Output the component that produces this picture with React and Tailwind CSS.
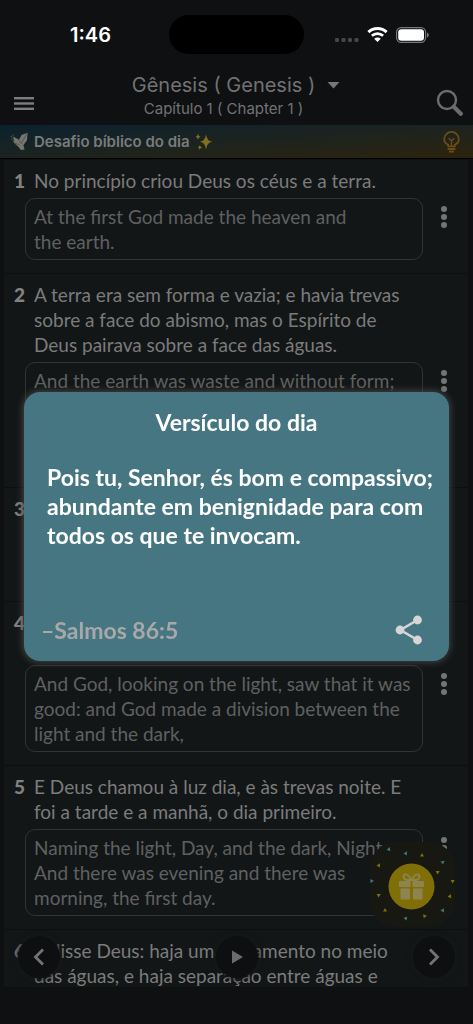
import React, { useState } from "react";

const verses = [
  {
    number: 1,
    lines: ["No princípio criou Deus os céus e a terra."],
    translation: ["At the first God made the heaven and", "the earth."],
  },
  {
    number: 2,
    lines: [
      "A terra era sem forma e vazia; e havia trevas",
      "sobre a face do abismo, mas o Espírito de",
      "Deus pairava sobre a face das águas.",
    ],
    translation: [
      "And the earth was waste and without form;",
      "and it was dark on the face of the deep:",
      "and the Spirit of God was moving on the",
      "face of the waters.",
    ],
  },
  {
    number: 3,
    lines: ["Disse Deus: haja luz. E houve luz."],
    translation: ["And God said, Let there be light: and", "there was light."],
  },
  {
    number: 4,
    lines: ["Viu Deus que a luz era boa; e fez", "separação entre a luz e as trevas."],
    translation: [
      "And God, looking on the light, saw that it was",
      "good: and God made a division between the",
      "light and the dark,",
    ],
  },
  {
    number: 5,
    lines: [
      "E Deus chamou à luz dia, e às trevas noite. E",
      "foi a tarde e a manhã, o dia primeiro.",
    ],
    translation: [
      "Naming the light, Day, and the dark, Night.",
      "And there was evening and there was",
      "morning, the first day.",
    ],
  },
  {
    number: 6,
    lines: [
      "E disse Deus: haja um firmamento no meio",
      "das águas, e haja separação entre águas e",
    ],
    translation: [],
  },
];

// x, y, rotation, color
const confetti = [
  [19, 7, 20, "#3c7480"],
  [36, 11, 30, "#3c7480"],
  [52, 13, 0, "#80700a"],
  [73, 20, 50, "#3c7480"],
  [9, 23, 30, "#80700a"],
  [68, 30, 60, "#80700a"],
  [83, 39, 60, "#80700a"],
  [2, 39, 90, "#3c7480"],
  [9, 53, 60, "#80700a"],
  [80, 54, 20, "#80700a"],
  [15, 68, 0, "#80700a"],
  [73, 68, 30, "#3c7480"],
  [36, 76, 40, "#3c7480"],
  [55, 74, 80, "#80700a"],
];

function StatusBar() {
  return (
    <div className="grid h-[69px] grid-cols-3 items-center">
      <span className="pl-[70px] text-[20px] leading-6 font-semibold text-white">
        1:46
      </span>
      <div className="h-[39px] w-[135px] justify-self-center rounded-full bg-black" />
      <div className="flex items-center justify-end gap-2 pr-11">
        <svg className="mt-2" width="24" height="15" viewBox="0 0 24 15" fill="#46474a">
          <rect x="0" y="7" width="4" height="4" rx="1.2" />
          <rect x="6.5" y="7" width="4" height="4" rx="1.2" />
          <rect x="13" y="7" width="4" height="4" rx="1.2" />
          <rect x="19.5" y="7" width="4" height="4" rx="1.2" />
        </svg>
        <svg width="21" height="15" viewBox="0 0 21 15" fill="none">
          <path d="M1.4 5.2C6.5.3 14.5.3 19.6 5.2" stroke="#fff" strokeWidth="3" />
          <path d="M4.9 8.8c3.2-3 8-3 11.2 0" stroke="#fff" strokeWidth="2.8" />
          <path d="M10.5 15 7.2 11.7c1.8-1.7 4.8-1.7 6.6 0z" fill="#fff" />
        </svg>
        <svg width="33" height="16" viewBox="0 0 33 16">
          <rect x="0.6" y="0.6" width="29" height="14.8" rx="4.6" fill="none" stroke="#77787a" strokeWidth="1.2" />
          <rect x="2.2" y="2.2" width="25.8" height="11.6" rx="3.2" fill="#fff" />
          <path d="M31 5.4c2.4.8 2.4 4.4 0 5.2z" fill="#77787a" />
        </svg>
      </div>
    </div>
  );
}

function Header() {
  return (
    <header className="flex h-14 items-start justify-between pr-[10px] pl-3">
      <button aria-label="Menu" className="mt-6 p-[2px]">
        <svg width="20" height="17" viewBox="0 0 20 17" fill="#7d7d7d">
          <rect y="2" width="20" height="2.4" />
          <rect y="7.3" width="20" height="2.4" />
          <rect y="12.6" width="20" height="2.4" />
        </svg>
      </button>
      <button className="flex items-start gap-3 text-[#727272]">
        <span className="flex flex-col items-center whitespace-nowrap">
          <span className="text-[20px] leading-8">Gênesis ( Genesis )</span>
          <span className="text-[15px] leading-4">Capítulo 1 ( Chapter 1 )</span>
        </span>
        <svg className="mt-[13px]" width="13" height="7" viewBox="0 0 13 7">
          <path d="M0.5 0h12L6.5 6.5z" fill="#777" />
        </svg>
      </button>
      <button aria-label="Buscar" className="mt-5">
        <svg width="27" height="27" viewBox="0 0 27 27" fill="none" stroke="#6c6c6c">
          <circle cx="11" cy="11" r="9" strokeWidth="2.4" />
          <path d="M17.8 17.8l7 7" strokeWidth="4.2" strokeLinecap="round" />
        </svg>
      </button>
    </header>
  );
}

function Banner() {
  return (
    <a
      href="#desafio"
      className="flex h-[34px] items-center border-b border-black bg-linear-to-br from-[#0b212f] via-[#1c231f] to-[#2d230c] px-[10px]"
    >
      <svg width="18" height="19" viewBox="0 0 18 19">
        <path
          d="M4 9.2 3.2 4.5 9 7.8 11.5 3 17.6.8 17 8.2 13.4 13.2 14.6 17.6 10.8 18 8.6 15 5.2 12 2.6 9z"
          fill="#77756f"
        />
        <path d="M8.9 8.4l2.2 3.2L16.8 1.6M5 11.4l4.4 1.4" stroke="#4f4e4b" strokeWidth="0.8" fill="none" />
        <path d="M4.6 9.6 1.4 5.6" stroke="#344a22" strokeWidth="0.8" />
        <path d="M0 4.6 2.4 6 2 3.6zM.6 7.4l2.4.4-1.4-1.4zM2.2 2.4l1.6 2.4.4-2.4z" fill="#35512a" />
      </svg>
      <span className="ml-[6px] text-[15px] leading-5 font-semibold text-[#787c7c]">
        Desafio bíblico do dia
      </span>
      <svg className="ml-[5px]" width="18" height="18" viewBox="0 0 18 18" fill="#80701c">
        <path d="M11 1.2Q11.8 8 17.4 8.800 11.8 9.600 11 16.600 10.200 9.600 4.800 8.800 10.200 8 11 1.200z" />
        <path d="M3 .8Q3.400 3.400 5.600 3.800 3.400 4.200 3 6.800 2.600 4.200.4 3.800 2.600 3.400 3 .8z" />
        <path d="M4.800 12Q5.100 14 7 14.400 5.100 14.800 4.800 17 4.500 14.800 2.600 14.400 4.500 14 4.800 12z" />
      </svg>
      <svg className="mr-[3px] ml-auto" width="17" height="22" viewBox="0 0 17 22" fill="none" stroke="#6b4c14" strokeWidth="1.8">
        <path d="M5.2 15.4V13.8C2.4 12.4 1.2 10.4 1.2 8.2a7.3 7.3 0 0 1 14.6 0c0 2.2-1.2 4.2-4 5.6v1.6z" />
        <path d="M5.6 7.2 8.5 9.8l2.9-2.6M8.5 9.8V15" strokeWidth="1.4" />
        <path d="M4.600 18h7.800M6 20.600h5" />
      </svg>
    </a>
  );
}

function Verse({ verse }) {
  return (
    <li className="flex border-b border-[#0c0e0f] bg-[#131617] pt-2 pb-[13px] text-[19px] leading-[25px]">
      <span className="w-[21px] shrink-0 text-right font-black text-[#828282]">
        {verse.number}
      </span>
      <div className="min-w-0 flex-1">
        <p className="pl-[9px] whitespace-nowrap text-[#7b7b7b]">
          {verse.lines.map((line) => (
            <span key={line} className="block">
              {line}
            </span>
          ))}
        </p>
        {verse.translation.length > 0 && (
          <div className="mt-[5px] flex items-start">
            <p className="min-w-0 flex-1 rounded-[10px] border border-[#313334] px-2 py-[5px] whitespace-nowrap text-[#5f6060]">
              {verse.translation.map((line) => (
                <span key={line} className="block">
                  {line}
                </span>
              ))}
            </p>
            <button aria-label={`Opções do versículo ${verse.number}`} className="flex w-[45px] justify-center pt-2 pr-1">
              <svg width="6" height="22" viewBox="0 0 6 22" fill="#747474">
                <circle cx="3" cy="3" r="3" />
                <circle cx="3" cy="11" r="3" />
                <circle cx="3" cy="19" r="3" />
              </svg>
            </button>
          </div>
        )}
      </div>
    </li>
  );
}

function RoundButton({ label, children }) {
  return (
    <button
      aria-label={label}
      className="flex size-[42px] items-center justify-center rounded-full bg-[#0e0f11] shadow-[0_0_5px_1px_#17191b]"
    >
      {children}
    </button>
  );
}

function GiftButton() {
  return (
    <button
      aria-label="Presente"
      className="absolute right-[18px] bottom-[97px] size-[85px] rounded-[26px] bg-[#171812]"
    >
      <svg width="85" height="85" viewBox="0 0 85 85">
        {confetti.map(([x, y, angle, color]) => (
          <path
            key={`${x}-${y}`}
            d="M-2 1.6 0-2 2 1.6z"
            transform={`translate(${x} ${y}) rotate(${angle})`}
            fill={color}
          />
        ))}
        <circle cx="41.5" cy="44.5" r="23" fill="#806f08" />
        <g fill="#8d8550">
          <rect x="29" y="39" width="11.5" height="6" rx="1" />
          <rect x="42.5" y="39" width="11.5" height="6" rx="1" />
          <rect x="30.5" y="46.5" width="9.5" height="11" rx="1" />
          <rect x="43" y="46.5" width="9.5" height="11" rx="1" />
        </g>
        <path
          d="M41.5 38C39 33.5 36.5 31.6 34.6 32.6 32.4 34 34 38 37 38h9c3 0 4.6-4 2.4-5.4C46.5 31.6 44 33.5 41.5 38z"
          fill="none"
          stroke="#8d8550"
          strokeWidth="1.8"
        />
      </svg>
    </button>
  );
}

function VerseOfTheDay() {
  return (
    <div className="fixed inset-0 flex items-center px-6 pt-[29px]">
      <section
        role="dialog"
        aria-labelledby="verse-title"
        className="flex h-[269px] w-full flex-col rounded-2xl bg-[#467682] font-['Lato',sans-serif] text-[23px] leading-[29px] font-bold text-white shadow-[0_0_7px_1px_#454748]"
      >
        <h2 id="verse-title" className="mt-4 text-center">
          Versículo do dia
        </h2>
        <p className="mt-[26px] pl-[23px] whitespace-nowrap">
          Pois tu, Senhor, és bom e compassivo;
          <br />
          abundante em benignidade para com
          <br />
          todos os que te invocam.
        </p>
        <div className="mt-auto mb-4 flex items-center justify-between pr-[26px] pl-[17px]">
          <span className="text-[#a8a8a8]">–Salmos 86:5</span>
          <button aria-label="Compartilhar">
            <svg width="28" height="30" viewBox="0 0 28 30" fill="#d6d6d6">
              <path d="M22.5 5 5.5 15l17 10" fill="none" stroke="#d6d6d6" strokeWidth="2.6" />
              <circle cx="5" cy="15" r="4.4" />
              <circle cx="22.5" cy="5" r="4.4" />
              <circle cx="22.5" cy="25" r="4.4" />
            </svg>
          </button>
        </div>
      </section>
    </div>
  );
}

function App() {
  const [showVerse] = useState(true);

  return (
    <div className="relative flex h-screen flex-col overflow-hidden bg-[#0f1012] font-['Inter',sans-serif]">
      <StatusBar />
      <Header />
      <Banner />
      <main className="min-h-0 flex-1 overflow-hidden pt-px pr-[5px] pl-1 font-['Lato',sans-serif]">
        <ul>
          {verses.map((verse) => (
            <Verse key={verse.number} verse={verse} />
          ))}
        </ul>
      </main>
      <footer className="h-[37px] shrink-0" />

      <nav className="absolute inset-x-[18px] bottom-[46px] flex justify-between">
        <RoundButton label="Capítulo anterior">
          <svg width="12" height="18" viewBox="0 0 12 18" fill="none" stroke="#747474" strokeWidth="2.8">
            <path d="M10 1.5 2.5 9l7.5 7.5" />
          </svg>
        </RoundButton>
        <RoundButton label="Ouvir">
          <svg width="12" height="14" viewBox="0 0 12 14">
            <path d="M1 0.5 12 7 1 13.5z" fill="#6c6c6c" />
          </svg>
        </RoundButton>
        <RoundButton label="Próximo capítulo">
          <svg width="12" height="18" viewBox="0 0 12 18" fill="none" stroke="#747474" strokeWidth="2.8">
            <path d="M2 1.5 9.5 9 2 16.5" />
          </svg>
        </RoundButton>
      </nav>
      <GiftButton />

      {showVerse && <VerseOfTheDay />}
    </div>
  );
}

export default App;
